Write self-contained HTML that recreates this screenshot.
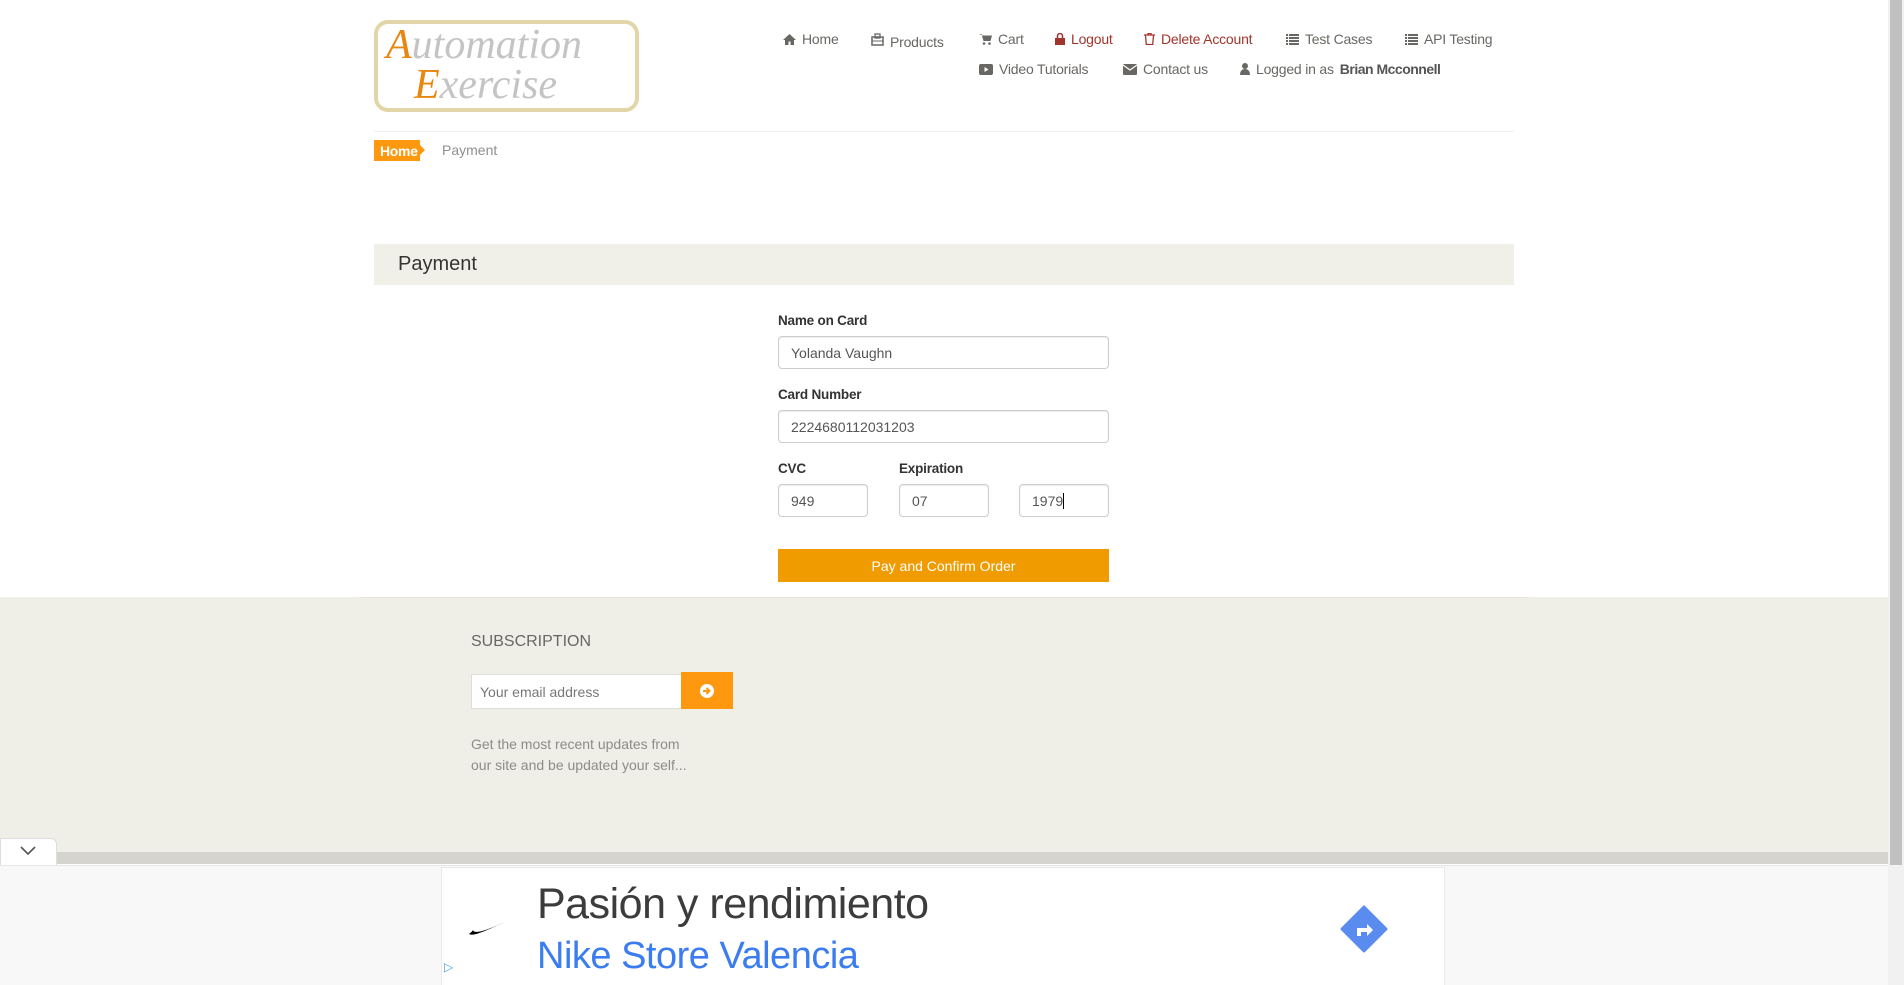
<!DOCTYPE html>
<html><head><meta charset="utf-8">
<style>
*{box-sizing:border-box;margin:0;padding:0}
html,body{width:1904px;height:985px;overflow:hidden;background:#fff;font-family:"Liberation Sans",Arial,sans-serif;color:#696763}
.abs{position:absolute}
.nav{position:absolute;font-size:14px;color:#696763;white-space:nowrap;display:flex;align-items:center;gap:6px;letter-spacing:-0.2px}
.nav.red{color:#a2352b}
.lbl{position:absolute;font-size:13.5px;font-weight:bold;color:#333;left:778px;letter-spacing:-0.2px}
.inp{position:absolute;border:1px solid #ccc;border-radius:4px;background:#fff;font-size:14px;color:#555;padding-left:12px;display:flex;align-items:center;box-shadow:inset 0 1px 1px rgba(0,0,0,.08)}
</style></head><body>
<!-- logo -->
<div class="abs" style="left:374px;top:20px;width:265px;height:92px;border:4px solid #e2d6a8;border-radius:14px;background:#fff"></div>
<div class="abs" style="left:386px;top:24px;font-family:'Liberation Serif',serif;font-style:italic;font-size:42px;color:#c4c4c4;line-height:42px"><span style="color:#e8870f">A</span>utomation</div>
<div class="abs" style="left:414px;top:64px;font-family:'Liberation Serif',serif;font-style:italic;font-size:42px;color:#c4c4c4;line-height:42px"><span style="color:#e8870f">E</span>xercise</div>

<!-- nav -->
<div class="nav" style="left:783px;top:31px"><svg width="13" height="11" viewBox="0 0 13 11"><path d="M6.5 0L0 6h2v5h3.5V7.5h2V11H11V6h2z" fill="#696763"/></svg>Home</div>
<div class="nav" style="left:871px;top:31px"><svg width="13" height="13" viewBox="0 0 13 13"><rect x="1" y="4" width="11" height="8" fill="none" stroke="#696763" stroke-width="1.5"/><rect x="4" y="1" width="5" height="4" fill="none" stroke="#696763" stroke-width="1.3"/><line x1="1" y1="8" x2="12" y2="8" stroke="#696763"/></svg><span style="position:relative;top:3px">Products</span></div>
<div class="nav" style="left:979px;top:31px"><svg width="13" height="12" viewBox="0 0 13 12"><path d="M0 1h2.5l2 7h7l1.5-5.5H3.5" fill="#696763"/><circle cx="5" cy="10.5" r="1.3" fill="#696763"/><circle cx="10.5" cy="10.5" r="1.3" fill="#696763"/></svg>Cart</div>
<div class="nav red" style="left:1055px;top:31px"><svg width="10" height="12" viewBox="0 0 10 12"><rect x="0" y="5" width="10" height="7" fill="#a2352b"/><path d="M2.5 5V3a2.5 2.5 0 015 0v2" fill="none" stroke="#a2352b" stroke-width="1.6"/></svg>Logout</div>
<div class="nav red" style="left:1144px;top:31px"><svg width="11" height="12" viewBox="0 0 11 12"><path d="M0 2h11M4 2V0.5h3V2M1.5 2.5l.8 9h6.4l.8-9" fill="none" stroke="#a2352b" stroke-width="1.3"/></svg>Delete Account</div>
<div class="nav" style="left:1286px;top:31px"><svg width="13" height="11" viewBox="0 0 13 11"><path d="M0 0h2v2H0zM3 0h10v2H3zM0 3h2v2H0zM3 3h10v2H3zM0 6h2v2H0zM3 6h10v2H3zM0 9h2v2H0zM3 9h10v2H3z" fill="#696763"/></svg>Test Cases</div>
<div class="nav" style="left:1405px;top:31px"><svg width="13" height="11" viewBox="0 0 13 11"><path d="M0 0h2v2H0zM3 0h10v2H3zM0 3h2v2H0zM3 3h10v2H3zM0 6h2v2H0zM3 6h10v2H3zM0 9h2v2H0zM3 9h10v2H3z" fill="#696763"/></svg>API Testing</div>
<div class="nav" style="left:979px;top:61px"><svg width="14" height="11" viewBox="0 0 14 11"><rect width="14" height="11" rx="2" fill="#696763"/><path d="M5.5 3v5l4-2.5z" fill="#fff"/></svg>Video Tutorials</div>
<div class="nav" style="left:1123px;top:61px"><svg width="14" height="11" viewBox="0 0 14 11"><rect width="14" height="11" rx="1" fill="#696763"/><path d="M0 1l7 5 7-5" fill="none" stroke="#fff" stroke-width="1.2"/></svg>Contact us</div>
<div class="nav" style="left:1240px;top:61px"><svg width="10" height="12" viewBox="0 0 10 12"><circle cx="5" cy="3" r="3" fill="#696763"/><path d="M0 12c0-4 2-6 5-6s5 2 5 6z" fill="#696763"/></svg>Logged in as<b style="color:#555;letter-spacing:-0.5px">Brian Mcconnell</b></div>

<div class="abs" style="left:374px;top:131px;width:1140px;height:1px;background:#f0f0ee"></div>
<!-- breadcrumb -->
<div class="abs" style="left:374px;top:140px;width:46px;height:21px;background:#fe980f;color:#fff;font-size:14px;font-weight:bold;display:flex;align-items:center;padding-left:6px;letter-spacing:-0.3px">Home</div>
<div class="abs" style="left:420px;top:145px;width:0;height:0;border-top:5px solid transparent;border-bottom:5px solid transparent;border-left:5px solid #fe980f"></div>
<div class="abs" style="left:442px;top:142px;font-size:14px;color:#8f8f8f">Payment</div>

<!-- payment bar -->
<div class="abs" style="left:374px;top:244px;width:1140px;height:41px;background:#f0efe8"></div>
<div class="abs" style="left:398px;top:253px;font-size:20px;color:#363432">Payment</div>

<div class="lbl" style="top:313px">Name on Card</div>
<div class="inp" style="left:778px;top:336px;width:331px;height:33px">Yolanda Vaughn</div>
<div class="lbl" style="top:387px">Card Number</div>
<div class="inp" style="left:778px;top:410px;width:331px;height:33px">2224680112031203</div>
<div class="lbl" style="top:461px">CVC</div>
<div class="lbl" style="top:461px;left:899px">Expiration</div>
<div class="inp" style="left:778px;top:484px;width:90px;height:33px">949</div>
<div class="inp" style="left:899px;top:484px;width:90px;height:33px">07</div>
<div class="inp" style="left:1019px;top:484px;width:90px;height:33px">1979<span style="display:inline-block;width:1px;height:16px;background:#000"></span></div>
<div class="abs" style="left:778px;top:549px;width:331px;height:33px;background:#f09b00;color:#fff;font-size:14px;display:flex;align-items:center;justify-content:center">Pay and Confirm Order</div>

<!-- footer -->
<div class="abs" style="left:0;top:597px;width:1888px;height:255px;background:#efeee7"></div>
<div class="abs" style="left:359px;top:597px;width:1170px;height:1px;background:#e6e4dc"></div>
<div class="abs" style="left:471px;top:633px;font-size:16px;color:#696763">SUBSCRIPTION</div>
<div class="abs" style="left:471px;top:674px;width:211px;height:35px;background:#fff;border:1px solid #ddd;font-size:14px;color:#777;padding-left:8px;display:flex;align-items:center">Your email address</div>
<div class="abs" style="left:681px;top:672px;width:52px;height:37px;background:#fe980f;display:flex;align-items:center;justify-content:center"><svg width="16" height="16" viewBox="0 0 16 16"><circle cx="8" cy="8" r="7" fill="#fff"/><path d="M4 8h6M7.5 5l3 3-3 3" fill="none" stroke="#fe980f" stroke-width="2"/></svg></div>
<div class="abs" style="left:471px;top:734px;font-size:14px;color:#8c8c88;line-height:21px">Get the most recent updates from<br>our site and be updated your self...</div>

<div class="abs" style="left:0;top:852px;width:1888px;height:12px;background:#d5d4cf"></div>
<div class="abs" style="left:0;top:838px;width:57px;height:27px;background:#fff;border:1px solid #ddd;border-bottom:none;border-radius:0 6px 0 0"></div>
<svg class="abs" style="left:20px;top:846px" width="16" height="10" viewBox="0 0 16 10"><path d="M1 1l7 7 7-7" fill="none" stroke="#555" stroke-width="1.6"/></svg>

<!-- ad -->
<div class="abs" style="left:0;top:865px;width:1888px;height:120px;background:#f8f8f8;border-top:1px solid #e6e6e6"></div>
<div class="abs" style="left:441px;top:867px;width:1004px;height:118px;background:#fff;border:1px solid #e8e8e8;border-bottom:none"></div>
<svg class="abs" style="left:469px;top:922px" width="36" height="14" viewBox="0 0 36 14"><path d="M0 12c4 2 10 0 36-12C14 10 5 12 4 8 3 10 1 11 0 12z" fill="#000"/></svg>
<div class="abs" style="left:537px;top:880px;font-size:43px;color:#3c3c3c;letter-spacing:-0.5px">Pasión y rendimiento</div>
<div class="abs" style="left:537px;top:935px;font-size:38px;color:#3b7cf0;letter-spacing:-0.5px">Nike Store Valencia</div>
<svg class="abs" style="left:1340px;top:905px" width="48" height="48" viewBox="0 0 48 48"><path d="M24 2L46 24 24 46 2 24z" fill="#5a8cf0" stroke="#5a8cf0" stroke-width="3" stroke-linejoin="round"/><path d="M17 31v-8h10v-4l6 6-6 6v-4h-6v4z" fill="#fff"/></svg>
<div class="abs" style="left:444px;top:960px;font-size:12px;color:#4aa3d8">▷</div>

<!-- scrollbar -->
<div class="abs" style="left:1888px;top:0;width:16px;height:985px;background:#f1f1f1"></div>
<div class="abs" style="left:1890px;top:0;width:12px;height:865px;background:#c1c1c1"></div>
</body></html>
